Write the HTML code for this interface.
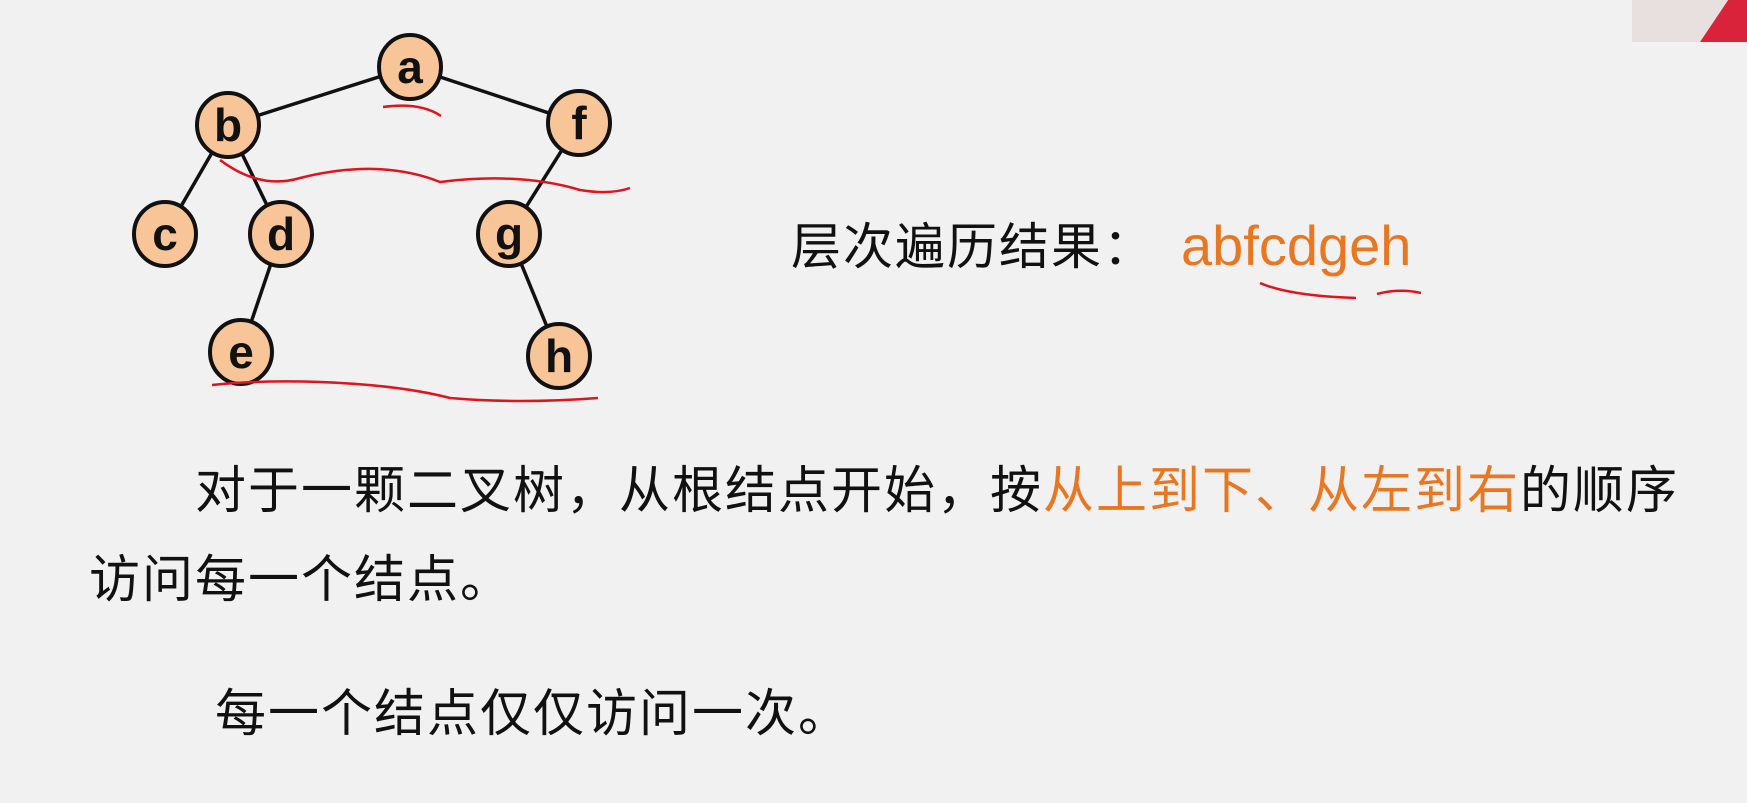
<!DOCTYPE html>
<html><head><meta charset="utf-8"><style>
body{margin:0;width:1747px;height:803px;background:#f1f1f1;overflow:hidden;position:relative;font-family:"Liberation Sans","Noto Sans CJK SC",sans-serif}
.t{position:absolute;white-space:nowrap;color:#111;font-size:50px;line-height:1;letter-spacing:2px}
.o{color:#e87722}
</style></head><body>
<div style="position:absolute;left:1632px;top:0;width:115px;height:42px;background:#e8e0de"></div>
<div style="position:absolute;left:1700px;top:0;width:47px;height:42px;background:#d8233a;clip-path:polygon(60% 0,100% 0,100% 100%,0 100%)"></div>
<svg width="1747" height="803" style="position:absolute;left:0;top:0">
<g stroke="#111" stroke-width="3.5">
<line x1="410" y1="67" x2="228" y2="125"/><line x1="410" y1="67" x2="579" y2="123"/>
<line x1="228" y1="125" x2="165" y2="234"/><line x1="228" y1="125" x2="281" y2="234"/>
<line x1="579" y1="123" x2="509" y2="234"/><line x1="281" y1="234" x2="241" y2="352"/>
<line x1="509" y1="234" x2="559" y2="356"/>
</g>
<g fill="#f7c597" stroke="#111" stroke-width="4">
<ellipse cx="410" cy="67" rx="31" ry="32"/><ellipse cx="228" cy="125" rx="31" ry="32"/><ellipse cx="579" cy="123" rx="31" ry="32"/>
<ellipse cx="165" cy="234" rx="31" ry="32"/><ellipse cx="281" cy="234" rx="31" ry="32"/><ellipse cx="509" cy="234" rx="31" ry="32"/>
<ellipse cx="241" cy="352" rx="31" ry="32"/><ellipse cx="559" cy="356" rx="31" ry="32"/>
</g>
<g font-family="Liberation Sans" font-weight="bold" font-size="46" text-anchor="middle" fill="#111">
<text x="410" y="83">a</text><text x="228" y="141">b</text><text x="579" y="139">f</text>
<text x="165" y="250">c</text><text x="281" y="250">d</text><text x="509" y="250">g</text>
<text x="241" y="368">e</text><text x="559" y="372">h</text>
</g>
<g fill="none" stroke="#e0141e" stroke-width="2.5">
<path d="M383 107 Q420 102 441 116"/>
<path d="M220 160 Q260 190 300 178 Q380 158 440 182 Q520 172 580 190 Q610 195 630 188"/>
<path d="M212 385 Q260 380 320 382 Q400 385 450 398 Q520 404 598 398"/>
<path d="M1260 283 Q1290 296 1356 298"/>
<path d="M1377 294 Q1400 288 1421 293"/>
</g>
</svg>
<div class="t" style="left:791px;top:222px;font-size:50px;letter-spacing:2px">层次遍历结果：</div>
<div class="t o" style="left:1181px;top:218px;font-size:56px;letter-spacing:0">abfcdgeh</div>
<div class="t" style="left:195px;top:465px;font-size:51px">对于一颗二叉树，从根结点开始，按<span class="o">从上到下、从左到右</span>的顺序</div>
<div class="t" style="left:89px;top:554px;font-size:51px">访问每一个结点。</div>
<div class="t" style="left:215px;top:688px;font-size:51px">每一个结点仅仅访问一次。</div>
</body></html>
